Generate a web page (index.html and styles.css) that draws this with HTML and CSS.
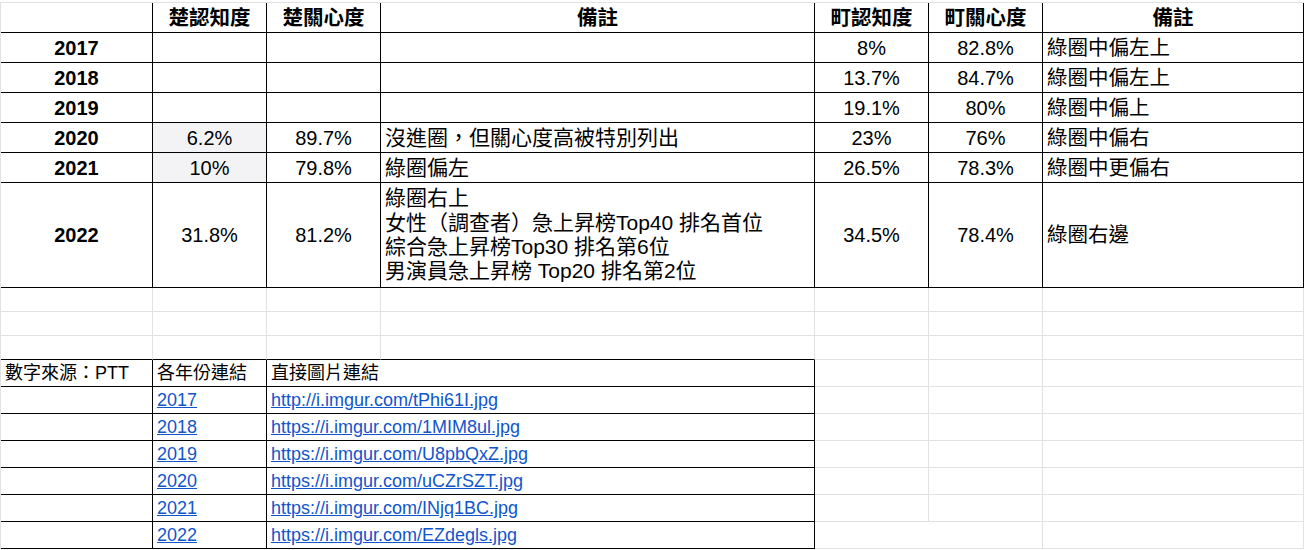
FILE: index.html
```html
<!DOCTYPE html>
<html lang="zh-Hant">
<head>
<meta charset="utf-8">
<title>Sheet</title>
<link rel="stylesheet" href="styles.css">
</head>
<body>
<div class="sheet">
  <!-- header row -->
  <div class="c k"></div>
  <div class="c k ctr hd">楚認知度</div>
  <div class="c k ctr hd">楚關心度</div>
  <div class="c k ctr hd">備註</div>
  <div class="c k ctr hd">町認知度</div>
  <div class="c k ctr hd">町關心度</div>
  <div class="c k ctr hd">備註</div>

  <!-- 2017 -->
  <div class="c k ctr b">2017</div>
  <div class="c k"></div>
  <div class="c k"></div>
  <div class="c k"></div>
  <div class="c k ctr">8%</div>
  <div class="c k ctr">82.8%</div>
  <div class="c k note2">綠圈中偏左上</div>

  <!-- 2018 -->
  <div class="c k ctr b">2018</div>
  <div class="c k"></div>
  <div class="c k"></div>
  <div class="c k"></div>
  <div class="c k ctr">13.7%</div>
  <div class="c k ctr">84.7%</div>
  <div class="c k note2">綠圈中偏左上</div>

  <!-- 2019 -->
  <div class="c k ctr b">2019</div>
  <div class="c k"></div>
  <div class="c k"></div>
  <div class="c k"></div>
  <div class="c k ctr">19.1%</div>
  <div class="c k ctr">80%</div>
  <div class="c k note2">綠圈中偏上</div>

  <!-- 2020 -->
  <div class="c k ctr b">2020</div>
  <div class="c k ctr shade">6.2%</div>
  <div class="c k ctr">89.7%</div>
  <div class="c k note">沒進圈，但關心度高被特別列出</div>
  <div class="c k ctr">23%</div>
  <div class="c k ctr">76%</div>
  <div class="c k note2">綠圈中偏右</div>

  <!-- 2021 -->
  <div class="c k ctr b">2021</div>
  <div class="c k ctr shade">10%</div>
  <div class="c k ctr">79.8%</div>
  <div class="c k note">綠圈偏左</div>
  <div class="c k ctr">26.5%</div>
  <div class="c k ctr">78.3%</div>
  <div class="c k note2">綠圈中更偏右</div>

  <!-- 2022 -->
  <div class="c k ctr b">2022</div>
  <div class="c k ctr">31.8%</div>
  <div class="c k ctr">81.2%</div>
  <div class="c k note">
    <div class="lines">
      <div>綠圈右上</div>
      <div>女性（調查者）急上昇榜Top40 排名首位</div>
      <div>綜合急上昇榜Top30 排名第6位</div>
      <div>男演員急上昇榜 Top20 排名第2位</div>
    </div>
  </div>
  <div class="c k ctr">34.5%</div>
  <div class="c k ctr">78.4%</div>
  <div class="c k note2">綠圈右邊</div>

  <!-- empty rows -->
  <div class="c"></div><div class="c"></div><div class="c"></div><div class="c"></div><div class="c"></div><div class="c"></div><div class="c"></div>
  <div class="c"></div><div class="c"></div><div class="c"></div><div class="c"></div><div class="c"></div><div class="c"></div><div class="c"></div>
  <div class="c kb"></div><div class="c kb"></div><div class="c kb"></div><div class="c kb"></div><div class="c"></div><div class="c"></div><div class="c"></div>

  <!-- links table -->
  <div class="c k sm">數字來源：PTT</div>
  <div class="c k sm">各年份連結</div>
  <div class="c k sm span2">直接圖片連結</div>
  <div class="c"></div><div class="c"></div><div class="c"></div>

  <div class="c k"></div>
  <div class="c k sm"><a class="lnk" href="#">2017</a></div>
  <div class="c k sm span2"><a class="lnk" href="#">http://i.imgur.com/tPhi61I.jpg</a></div>
  <div class="c"></div><div class="c"></div><div class="c"></div>

  <div class="c k"></div>
  <div class="c k sm"><a class="lnk" href="#">2018</a></div>
  <div class="c k sm span2"><a class="lnk" href="#">https://i.imgur.com/1MIM8ul.jpg</a></div>
  <div class="c"></div><div class="c"></div><div class="c"></div>

  <div class="c k"></div>
  <div class="c k sm"><a class="lnk" href="#">2019</a></div>
  <div class="c k sm span2"><a class="lnk" href="#">https://i.imgur.com/U8pbQxZ.jpg</a></div>
  <div class="c"></div><div class="c"></div><div class="c"></div>

  <div class="c k"></div>
  <div class="c k sm"><a class="lnk" href="#">2020</a></div>
  <div class="c k sm span2"><a class="lnk" href="#">https://i.imgur.com/uCZrSZT.jpg</a></div>
  <div class="c"></div><div class="c"></div><div class="c"></div>

  <div class="c k"></div>
  <div class="c k sm"><a class="lnk" href="#">2021</a></div>
  <div class="c k sm span2"><a class="lnk" href="#">https://i.imgur.com/INjq1BC.jpg</a></div>
  <div class="c"></div><div class="c"></div><div class="c"></div>

  <div class="c k"></div>
  <div class="c k sm"><a class="lnk" href="#">2022</a></div>
  <div class="c k sm span2"><a class="lnk" href="#">https://i.imgur.com/EZdegls.jpg</a></div>
  <div class="c span2"></div><div class="c"></div>
</div>
</body>
</html>
```

FILE: styles.css
```css
html, body {
  margin: 0;
  padding: 0;
  background: #ffffff;
}

body {
  font-family: "Liberation Sans", Arial, "Noto Sans CJK TC", sans-serif;
  font-size: 20px;
  color: #000000;
  padding-top: 2px;
}

.sheet {
  display: grid;
  grid-template-columns: 152px 114px 114px 434px 114px 114px 261px;
  grid-template-rows: repeat(6, 30px) 105px repeat(3, 24px) repeat(7, 27px);
  width: 1304px;
  box-sizing: border-box;
  border-top: 1px solid #e2e2e2;
  border-left: 1px solid #e2e2e2;
}

.c {
  box-sizing: border-box;
  border-right: 1px solid #e2e2e2;
  border-bottom: 1px solid #e2e2e2;
  display: flex;
  align-items: center;
  padding: 0 4px;
  white-space: nowrap;
  overflow: hidden;
  line-height: 24px;
}

.k {
  border-right-color: #000000;
  border-bottom-color: #000000;
}

.kb {
  border-bottom-color: #000000;
}

.ctr {
  justify-content: center;
}

.b {
  font-weight: bold;
}

.hd {
  font-weight: bold;
  font-size: 20.5px;
}

.note {
  font-size: 21px;
}

.note2 {
  font-size: 20.5px;
}

.sm {
  font-size: 18px;
}

.shade {
  background: #f3f3f5;
}

.span2 {
  grid-column: span 2;
}

.lines {
  line-height: 24.3px;
}

.lnk {
  color: #1155cc;
  text-decoration: underline;
}
```
